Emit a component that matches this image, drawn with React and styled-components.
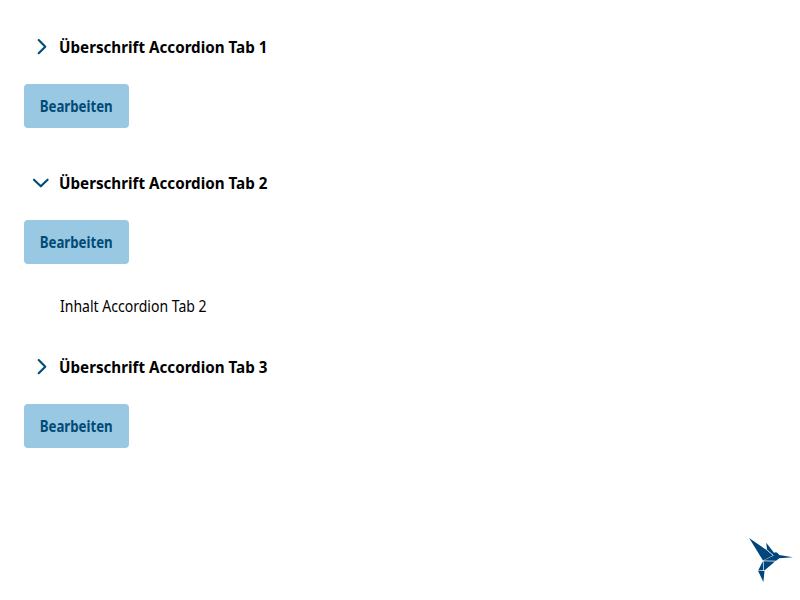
import React, { useState } from 'react';
import styled, { createGlobalStyle } from 'styled-components';

const GlobalStyle = createGlobalStyle`
  * { box-sizing: border-box; }
  body { margin: 0; background: #fff; font-family: BundesSans, "Noto Sans", "Open Sans", sans-serif; color: #000; }
`;
const Page = styled.main`
  min-height: 600px;
  padding: 24px;
  position: relative;
`;
const Item = styled.section`
  height: ${p => (p.$open ? 184 : 136)}px;
`;
const Header = styled.button`
  display: flex;
  align-items: center;
  height: 44px;
  margin: 0 0 16px;
  padding: 0 0 0 8px;
  border: 0;
  background: none;
  color: inherit;
  font: inherit;
`;
const Chevron = styled.svg`
  width: 20px;
  height: 20px;
  margin-right: 7px;
  fill: none;
  stroke: #004b76;
  stroke-width: 2.1;
  stroke-linecap: round;
  stroke-linejoin: round;
`;
const Title = styled.span`
  font-size: 16.5px;
  font-weight: 700;
  line-height: 24px;
  padding-top: 1px;
  white-space: nowrap;
  transform: scaleX(0.92);
  transform-origin: left;
`;
const EditButton = styled.button`
  display: flex;
  align-items: center;
  justify-content: center;
  width: 105px;
  height: 44px;
  padding: 0;
  border: 0;
  border-radius: 4px;
  background: #99c8e2;
  color: #004b76;
  font-family: inherit;
  font-size: 15.3px;
  font-weight: 700;
`;
const ButtonText = styled.span`
  transform: scaleX(0.865);
`;
const Content = styled.p`
  margin: 31px 0 0 36px;
  font-size: 15.4px;
  line-height: 24px;
  width: max-content;
  transform: scaleX(0.911);
  transform-origin: left;
`;
const Bird = styled.svg`
  position: absolute;
  left: 748px;
  top: 536px;
  width: 46px;
  height: 48px;
`;

const tabs = [1, 2, 3];

export default function App() {
  const [open, setOpen] = useState(2);
  return (
    <Page>
      <GlobalStyle />
      {tabs.map(n => (
        <Item key={n} $open={open === n}>
          <Header aria-expanded={open === n} onClick={() => setOpen(open === n ? 0 : n)}>
            <Chevron viewBox="0 0 20 20">
              <path d={open === n ? 'M2 7.7 8.8 14.3 15.6 7.7' : 'M6.7 4 13.3 10.7 6.7 17.2'} />
            </Chevron>
            <Title>Überschrift Accordion Tab {n}</Title>
          </Header>
          <EditButton><ButtonText>Bearbeiten</ButtonText></EditButton>
          {open === n && <Content>Inhalt Accordion Tab {n}</Content>}
        </Item>
      ))}
      <Bird viewBox="0 0 46 48" aria-hidden="true">
        <path fill="#00457c" d="M1.1 2.1 18.3 13.8 24.8 19.6 15 24.4ZM18.2 6.8 26 16.8Q29 14.8 31.2 18.9L44.9 21.2 31.3 22.2 28 24.7 15.6 24.6 25.8 19.5 19 13.5ZM15.6 25.3 27 25.6 16.7 34.2 15.8 34.2ZM14.8 25.2 15.2 34.2 10.2 34.4ZM10.1 35 16.5 34.9 15.4 46Z" />
      </Bird>
    </Page>
  );
}
